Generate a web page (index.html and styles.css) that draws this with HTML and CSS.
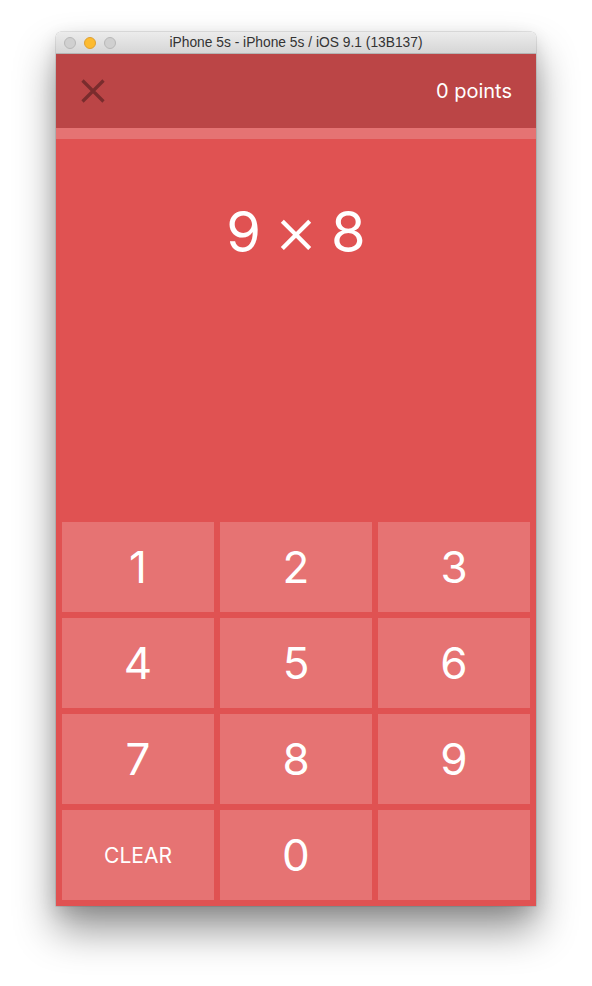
FILE: index.html
```html
<!DOCTYPE html>
<html>
<head>
<meta charset="utf-8">
<title>iPhone 5s - iPhone 5s / iOS 9.1 (13B137)</title>
<link rel="stylesheet" href="styles.css">
</head>
<body>
<div class="desk">
  <div class="window">
    <div class="titlebar">
      <div class="lights">
        <span class="light gray"></span>
        <span class="light yellow"></span>
        <span class="light gray"></span>
      </div>
      <div class="title">iPhone 5s - iPhone 5s / iOS 9.1 (13B137)</div>
    </div>
    <div class="app">
      <header class="nav">
        <svg class="close" width="24" height="24" viewBox="0 0 24 24">
          <path d="M1.5 1.5 L22.5 22.5 M22.5 1.5 L1.5 22.5" stroke="#7a2c2d" stroke-width="3.2" fill="none"/>
        </svg>
        <span class="points">0 points</span>
      </header>
      <div class="progress"></div>
      <main class="question">9 <span class="times">×</span> 8</main>
      <div class="keypad">
        <button class="key">1</button>
        <button class="key">2</button>
        <button class="key">3</button>
        <button class="key">4</button>
        <button class="key">5</button>
        <button class="key">6</button>
        <button class="key">7</button>
        <button class="key">8</button>
        <button class="key">9</button>
        <button class="key clear">CLEAR</button>
        <button class="key">0</button>
        <button class="key"></button>
      </div>
    </div>
  </div>
</div>
</body>
</html>
```

FILE: styles.css
```css
html, body {
  margin: 0;
  padding: 0;
  background: #ffffff;
}

.desk {
  display: flex;
  align-items: flex-start;
  padding: 32px 0 0 56px;
  height: 986px;
  box-sizing: border-box;
  overflow: hidden;
}

.window {
  width: 480px;
  display: flex;
  flex-direction: column;
  border-radius: 5px 5px 0 0;
  box-shadow: 0 0 0 0.5px rgba(0,0,0,0.18), 0 24px 40px rgba(0,0,0,0.42), 0 6px 18px rgba(0,0,0,0.12);
}

.titlebar {
  height: 22px;
  box-sizing: border-box;
  position: relative;
  display: flex;
  align-items: center;
  justify-content: center;
  background: linear-gradient(#ececec, #d6d6d6);
  border-bottom: 1px solid #b4b4b4;
  border-radius: 5px 5px 0 0;
}

.lights {
  position: absolute;
  left: 8px;
  top: 5px;
  display: flex;
  gap: 8px;
}

.light {
  width: 12px;
  height: 12px;
  border-radius: 50%;
  box-sizing: border-box;
}

.light.gray {
  background: #d0d0d0;
  border: 0.5px solid #b8b8b8;
}

.light.yellow {
  background: #fdbb30;
  border: 0.5px solid #dea033;
}

.title {
  font-family: "Liberation Sans", Arial, sans-serif;
  font-size: 13.8px;
  color: #333333;
  line-height: 16px;
}

.app {
  height: 852px;
  display: flex;
  flex-direction: column;
  background: #e05252;
  font-family: Inter, "Open Sans", sans-serif;
  color: #ffffff;
}

.nav {
  height: 74px;
  flex: none;
  display: flex;
  align-items: center;
  justify-content: space-between;
  padding: 0 24px 0 25px;
  background: #bb4546;
}

.close {
  display: block;
}

.points {
  font-size: 20px;
  font-weight: 400;
}

.progress {
  height: 11px;
  flex: none;
  background: #e57373;
}

.question {
  flex: 1;
  text-align: center;
  font-size: 56px;
  line-height: 64px;
  padding-top: 61px;
  font-weight: 400;
  word-spacing: -3px;
}

.times {
  font-size: 68px;
  line-height: 0;
  vertical-align: -2px;
  font-weight: 300;
}

.keypad {
  flex: none;
  display: grid;
  grid-template-columns: repeat(3, 152px);
  grid-auto-rows: 90px;
  gap: 6px;
  padding: 6px;
}

.key {
  border: 0;
  margin: 0;
  padding: 0;
  background: #e67373;
  color: #ffffff;
  font-family: Inter, "Open Sans", sans-serif;
  font-size: 44px;
  font-weight: 400;
  display: flex;
  align-items: center;
  justify-content: center;
}

.key.clear {
  font-size: 21px;
}
```
